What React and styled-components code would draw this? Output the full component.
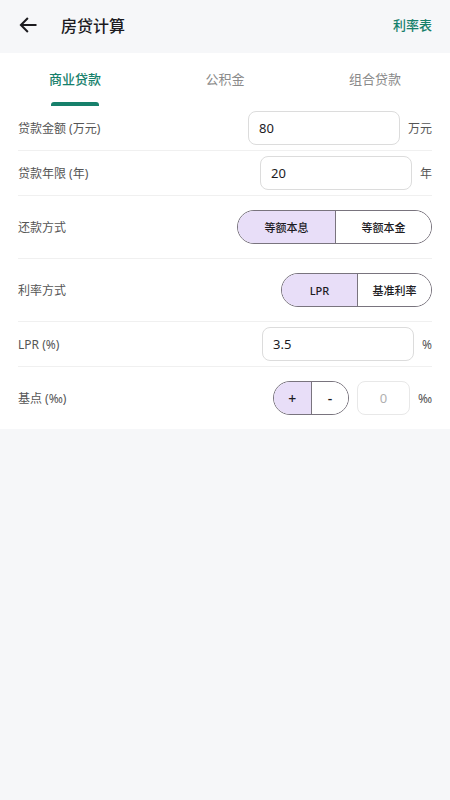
import React from "react";
import styled, { createGlobalStyle } from "styled-components";

const FONT = `"Noto Sans", "Noto Sans CJK SC", sans-serif`;

const Global = createGlobalStyle`
  html, body { margin: 0; padding: 0; background: #f6f7f9; }
  body { font-family: ${FONT}; }
  * { box-sizing: border-box; }
`;

const Page = styled.div`
  width: 450px;
  min-height: 800px;
  background: #f6f7f9;
`;

const Header = styled.div`
  height: 53px;
  display: flex;
  align-items: center;
  padding: 0 18px 4px 17px;
`;

const Back = styled.button`
  width: 22px;
  height: 22px;
  padding: 0;
  border: none;
  background: none;
  display: flex;
  align-items: center;
  justify-content: center;
  color: #1c1b1f;
`;

const Title = styled.div`
  margin-left: 22px;
  font-size: 16px;
  font-weight: 500;
  color: #1c1b1f;
  flex: 1;
`;

const HeaderLink = styled.div`
  font-size: 13px;
  font-weight: 500;
  color: #16806b;
`;

const Card = styled.div`
  background: #fff;
  padding: 0 18px;
`;

const Tabs = styled.div`
  display: grid;
  grid-template-columns: repeat(3, 1fr);
  height: 53px;
  margin: 0 -18px;
`;

const Tab = styled.div`
  position: relative;
  display: flex;
  align-items: center;
  justify-content: center;
  padding-bottom: 2px;
  font-size: 13px;
  font-weight: ${(p) => (p.$active ? 500 : 400)};
  color: ${(p) => (p.$active ? "#16806b" : "#8a8a8a")};
  &::after {
    content: "";
    display: ${(p) => (p.$active ? "block" : "none")};
    position: absolute;
    bottom: 0;
    left: 50%;
    width: 48px;
    margin-left: -24px;
    height: 4px;
    border-radius: 3px 3px 0 0;
    background: #16806b;
  }
`;

const Row = styled.div`
  display: flex;
  align-items: center;
  justify-content: space-between;
  padding: ${(p) => (p.$tall ? "14px 0" : "5px 0")};
  border-bottom: ${(p) => (p.$last ? "none" : "1px solid #f0f0f0")};
`;

const Label = styled.div`
  font-size: 12px;
  color: #555;
`;

const Controls = styled.div`
  display: flex;
  align-items: center;
  gap: 8px;
`;

const Input = styled.input`
  width: ${(p) => p.$w || 152}px;
  height: 34px;
  border: 1px solid ${(p) => (p.$muted ? "#e8e8e8" : "#dcdcdc")};
  border-radius: 8px;
  padding: 0 10px;
  font-family: ${FONT};
  font-size: 13px;
  color: ${(p) => (p.$muted ? "#b0b0b0" : "#1c1b1f")};
  text-align: ${(p) => (p.$center ? "center" : "left")};
  outline: none;
  background: #fff;
`;

const Unit = styled.span`
  font-size: 12px;
  color: #555;
`;

const Segmented = styled.div`
  display: flex;
  height: 34px;
  border: 1px solid #79747e;
  border-radius: 17px;
  overflow: hidden;
`;

const Segment = styled.button`
  width: ${(p) => p.$w}px;
  height: 100%;
  border: none;
  border-left: ${(p) => (p.$first ? "none" : "1px solid #79747e")};
  background: ${(p) => (p.$on ? "#e8def8" : "#fff")};
  font-family: ${FONT};
  font-size: ${(p) => p.$fs || 11}px;
  font-weight: 500;
  color: #1c1b1f;
  padding: 0;
  display: flex;
  align-items: center;
  justify-content: center;
`;

export default function App() {
  return (
    <Page>
      <Global />
      <Header>
        <Back aria-label="back">
          <svg width="20" height="20" viewBox="0 0 24 24" fill="none" stroke="#1c1b1f" strokeWidth="2.4" strokeLinecap="square">
            <path d="M21 12H4M11 4.5L3.5 12l7.5 7.5" />
          </svg>
        </Back>
        <Title>房贷计算</Title>
        <HeaderLink>利率表</HeaderLink>
      </Header>
      <Card>
        <Tabs>
          <Tab $active>商业贷款</Tab>
          <Tab>公积金</Tab>
          <Tab>组合贷款</Tab>
        </Tabs>
        <Row>
          <Label>贷款金额 (万元)</Label>
          <Controls>
            <Input defaultValue="80" />
            <Unit>万元</Unit>
          </Controls>
        </Row>
        <Row>
          <Label>贷款年限 (年)</Label>
          <Controls>
            <Input defaultValue="20" />
            <Unit>年</Unit>
          </Controls>
        </Row>
        <Row $tall>
          <Label>还款方式</Label>
          <Segmented>
            <Segment $first $on $w={97}>等额本息</Segment>
            <Segment $w={96}>等额本金</Segment>
          </Segmented>
        </Row>
        <Row $tall>
          <Label>利率方式</Label>
          <Segmented>
            <Segment $first $on $w={75}>LPR</Segment>
            <Segment $w={74}>基准利率</Segment>
          </Segmented>
        </Row>
        <Row>
          <Label>LPR (%)</Label>
          <Controls>
            <Input defaultValue="3.5" />
            <Unit>%</Unit>
          </Controls>
        </Row>
        <Row $tall $last>
          <Label>基点 (‰)</Label>
          <Controls>
            <Segmented>
              <Segment $first $on $w={37} $fs={14}>+</Segment>
              <Segment $w={37} $fs={14}>-</Segment>
            </Segmented>
            <Input $w={53} $muted $center defaultValue="0" />
            <Unit>‰</Unit>
          </Controls>
        </Row>
      </Card>
    </Page>
  );
}
